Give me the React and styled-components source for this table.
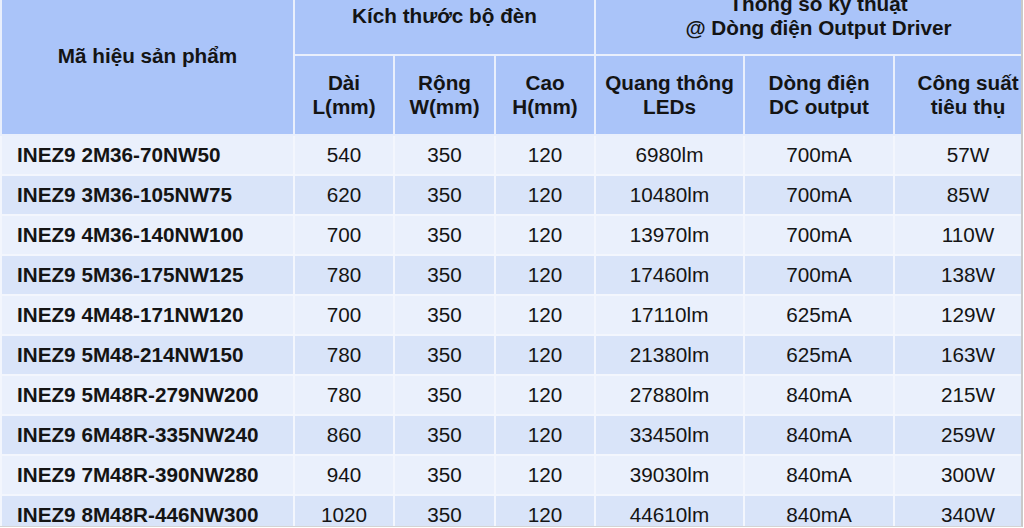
import React from "react";
import styled, { createGlobalStyle } from "styled-components";

const GlobalStyle = createGlobalStyle`
    html, body {
        margin: 0;
        padding: 0;
        background: #ffffff;
    }
    body {
        font-family: "Liberation Sans", Arial, sans-serif;
    }
`;

// vùng nhìn của bảng, phần trên của header bị cắt như trong ảnh
const Frame = styled.div`
    width: 1021px;
    height: 526px;
    overflow: hidden;
    border-right: 2px solid #c9c9c9;
    border-bottom: 1px solid #d4d4d4;
`;

const Table = styled.table`
    margin-top: -24px;
    width: 1041px;
    table-layout: fixed;
    border-collapse: collapse;
    font-size: 20.7px;
    color: #141414;
`;

const Head = styled.th`
    background: #aac4f9;
    border: 2px solid #e9effc;
    font-weight: 700;
    line-height: 24px;
    text-align: center;
    vertical-align: middle;
    padding: 0;
    height: ${(p) => p.$h}px;
`;

const Row = styled.tr`
    height: 40px;
    background: ${(p) => (p.$alt ? "#d9e4f9" : "#eaf0fc")};
`;

const Cell = styled.td`
    border: 2px solid #f3f6fd;
    text-align: ${(p) => (p.$left ? "left" : "center")};
    font-weight: ${(p) => (p.$left ? 700 : 400)};
    padding: ${(p) => (p.$left ? "0 0 0 15px" : "0")};
    white-space: nowrap;
`;

const rows = [
    ["INEZ9 2M36-70NW50", 540, 350, 120, "6980lm", "700mA", "57W"],
    ["INEZ9 3M36-105NW75", 620, 350, 120, "10480lm", "700mA", "85W"],
    ["INEZ9 4M36-140NW100", 700, 350, 120, "13970lm", "700mA", "110W"],
    ["INEZ9 5M36-175NW125", 780, 350, 120, "17460lm", "700mA", "138W"],
    ["INEZ9 4M48-171NW120", 700, 350, 120, "17110lm", "625mA", "129W"],
    ["INEZ9 5M48-214NW150", 780, 350, 120, "21380lm", "625mA", "163W"],
    ["INEZ9 5M48R-279NW200", 780, 350, 120, "27880lm", "840mA", "215W"],
    ["INEZ9 6M48R-335NW240", 860, 350, 120, "33450lm", "840mA", "259W"],
    ["INEZ9 7M48R-390NW280", 940, 350, 120, "39030lm", "840mA", "300W"],
    ["INEZ9 8M48R-446NW300", 1020, 350, 120, "44610lm", "840mA", "340W"],
];

const widths = [293, 100, 101, 100, 149, 150, 148];

const App = () => {
    return (
        <>
            <GlobalStyle/>
            <Frame>
                <Table>
                    <colgroup>
                        {widths.map((w, i) => (
                            <col key={i} style={{width: w}}/>
                        ))}
                    </colgroup>
                    <thead>
                        <tr>
                            <Head rowSpan={2} $h={76}>Mã hiệu sản phẩm</Head>
                            <Head colSpan={3} $h={76}>Kích thước bộ đèn</Head>
                            <Head colSpan={3} $h={76}>
                                Thông số kỹ thuật<br/>@ Dòng điện Output Driver
                            </Head>
                        </tr>
                        <tr>
                            <Head $h={78}>Dài<br/>L(mm)</Head>
                            <Head $h={78}>Rộng<br/>W(mm)</Head>
                            <Head $h={78}>Cao<br/>H(mm)</Head>
                            <Head $h={78}>Quang thông<br/>LEDs</Head>
                            <Head $h={78}>Dòng điện<br/>DC output</Head>
                            <Head $h={78}>Công suất<br/>tiêu thụ</Head>
                        </tr>
                    </thead>
                    <tbody>
                        {rows.map((r, i) => (
                            <Row key={r[0]} $alt={i % 2 === 1}>
                                {r.map((v, j) => (
                                    <Cell key={j} $left={j === 0}>{v}</Cell>
                                ))}
                            </Row>
                        ))}
                    </tbody>
                </Table>
            </Frame>
        </>
    );
};

export default App;
